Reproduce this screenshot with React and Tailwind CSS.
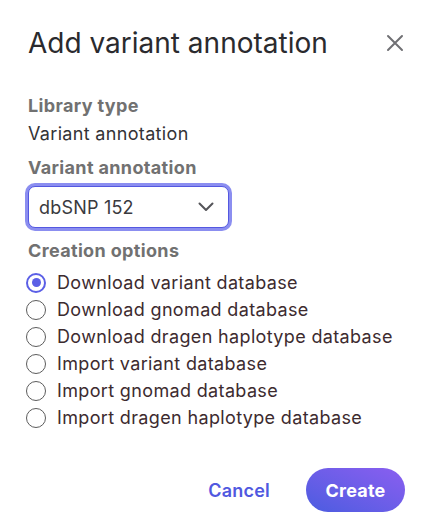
import React, { useState } from 'react';

const options = [
  'Download variant database',
  'Download gnomad database',
  'Download dragen haplotype database',
  'Import variant database',
  'Import gnomad database',
  'Import dragen haplotype database',
];

const Radio = ({ checked, label, onClick }) => (
  <label className="flex items-center gap-[11px] h-[27px] cursor-pointer" onClick={onClick}>
    <span
      className={`flex items-center justify-center w-[20px] h-[20px] rounded-full bg-white ${
        checked ? 'border-[2.5px] border-[#5b5fe6]' : 'border-[1.5px] border-[#5c5c5c]'
      }`}
    >
      {checked && <span className="w-[9px] h-[9px] rounded-full bg-[#5b5fe6]" />}
    </span>
    <span className="text-[18px] tracking-[0.35px] text-[#3d2b2f]">{label}</span>
  </label>
);

export default function App() {
  const [selected, setSelected] = useState(0);

  return (
    <div
      className="w-[444px] h-[528px] bg-white px-[28px] pt-[26px]"
      style={{ fontFamily: 'Inter, "Noto Sans", sans-serif' }}
    >
      <div className="flex items-center justify-between">
        <h1 className="text-[28px] leading-[34px] text-[#2a2a2e]">Add variant annotation</h1>
        <button className="mr-[12px] text-[#707074]">
          <svg width="18" height="18" viewBox="0 0 18 18" fill="none" stroke="currentColor" strokeWidth="2" strokeLinecap="round">
            <path d="M2 2L16 16M16 2L2 16" />
          </svg>
        </button>
      </div>

      <div className="mt-[32px] text-[18px] font-bold tracking-[0.35px] text-[#717171] leading-[28px]">Library type</div>
      <div className="text-[18px] tracking-[0.33px] text-[#333336] leading-[28px]">Variant annotation</div>

      <div className="mt-[6px] text-[18px] font-bold tracking-[0.35px] text-[#717171] leading-[28px]">Variant annotation</div>
      <div className="mt-[1px] ml-[-3px] w-[207px] rounded-[10px] bg-[#8b8ef0] p-[3px]">
        <div className="flex items-center justify-between h-[42px] rounded-[7px] border border-[#5458e0] bg-white pl-[10px] pr-[14px]">
          <span className="text-[18px] tracking-[0.2px] text-[#3a3a3e]">dbSNP 152</span>
          <svg width="16" height="10" viewBox="0 0 16 10" fill="none" stroke="#555559" strokeWidth="2" strokeLinecap="round" strokeLinejoin="round">
            <path d="M1.5 1.5L8 8L14.5 1.5" />
          </svg>
        </div>
      </div>

      <div className="mt-[6px] text-[18px] font-bold tracking-[0.35px] text-[#717171] leading-[28px]">Creation options</div>
      <div className="mt-[4px] flex flex-col ml-[-2px]">
        {options.map((o, i) => (
          <Radio key={o} label={o} checked={selected === i} onClick={() => setSelected(i)} />
        ))}
      </div>

      <div className="mt-[37px] flex items-center justify-end gap-[36px] pr-[11px]">
        <button className="text-[18px] font-semibold tracking-[0.2px] text-[#5058e0]">Cancel</button>
        <button className="h-[44px] w-[99px] rounded-full bg-gradient-to-tr from-[#4a5ce0] to-[#8a5ef0] text-[18px] font-bold tracking-[0.2px] text-white">
          Create
        </button>
      </div>
    </div>
  );
}
